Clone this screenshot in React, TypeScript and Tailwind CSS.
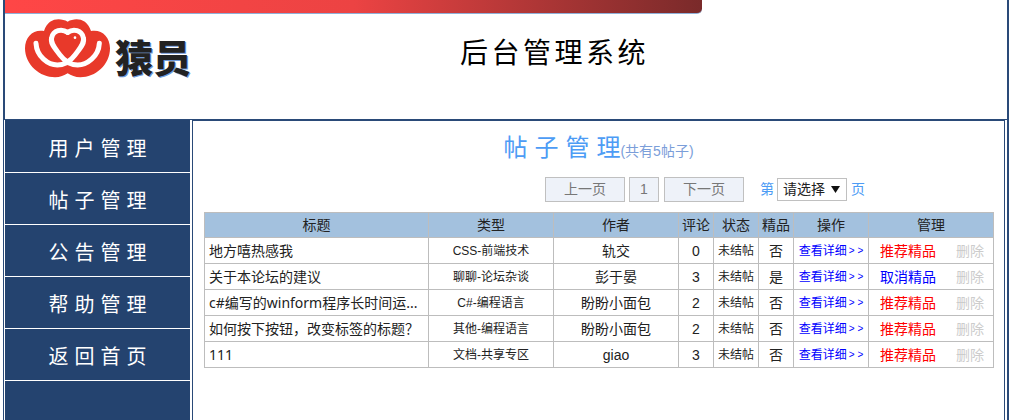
const menu = ["用户管理", "帖子管理", "公告管理", "帮助管理", "返回首页"]

const posts = [
  { title: "地方嘻热感我", type: "CSS-前端技术", author: "轨交", count: 0, best: "否", action: "推荐精品" },
  { title: "关于本论坛的建议", type: "聊聊-论坛杂谈", author: "彭于晏", count: 3, best: "是", action: "取消精品" },
  { title: "c#编写的winform程序长时间运...", type: "C#-编程语言", author: "盼盼小面包", count: 2, best: "否", action: "推荐精品" },
  { title: "如何按下按钮，改变标签的标题？", type: "其他-编程语言", author: "盼盼小面包", count: 2, best: "否", action: "推荐精品" },
  { title: "111", type: "文档-共享专区", author: "giao", count: 3, best: "否", action: "推荐精品" },
]

function Logo() {
  return (
    <svg className="w-[100px] h-[70px] shrink-0" viewBox="0 0 300 210">
      <path
        fill="#e8392a"
        d="M143 20C120 8 85 8 72 48C40 42 15 65 15 100C15 150 60 187 105 187C120 187 133 182 143 175C153 182 166 187 181 187C226 187 270 150 270 100C270 65 245 42 213 48C200 8 165 8 143 20Z"
      />
      <g fill="none" stroke="#fff" strokeWidth="15" strokeLinecap="round">
        <path d="M48 85C50 125 85 150 112 150C135 150 150 140 165 120C180 100 195 85 190 68C185 45 160 40 143 52" />
        <path d="M238 85C236 125 200 150 173 150C150 150 135 140 120 120C105 100 90 85 95 68C100 45 125 40 143 52" />
      </g>
      <circle cx="165" cy="68" r="4" fill="#fff" />
    </svg>
  )
}

export default function App() {
  return (
    <div className="ml-[3px] w-[1006px] h-[420px] overflow-hidden bg-white font-['Liberation_Sans','Noto_Sans_CJK_SC',sans-serif] text-[14px] text-[#222]">
      {/* Header */}
      <header className="h-[120px] border-x-2 border-b border-[#2a4a78]">
        <div className="w-[697px] h-[14px] border-b border-[#8fb0d8] rounded-br-[5px] bg-gradient-to-r from-[#ff4646] via-[#ec4343] to-[#7a2a2a]"></div>
        <div className="flex items-start">
          <div className="ml-[15px] mt-[1px]">
            <Logo />
          </div>
          <div className="-ml-[5px] mt-[23px] w-[84px] text-[38px] leading-[44px] font-black text-[#222] whitespace-nowrap [text-shadow:1px_1px_0_#6f9bdc]">
            猿员
          </div>
          <h1 className="ml-[261px] mt-[20px] text-[28px] leading-[40px] font-normal tracking-[3.5px] text-black whitespace-nowrap">
            后台管理系统
          </h1>
        </div>
      </header>

      <div className="flex h-[300px] border-r-2 border-[#2a4a78]">
        {/* Sidebar */}
        <aside className="w-[189px] h-full border-l border-[#2a4a78] pl-[1px]">
          <nav className="w-[185px] h-full pt-[1px] bg-[#24436f] text-white">
            {menu.map((item) => (
              <div
                key={item}
                className="h-[52px] border-b border-white flex items-center justify-center text-[20px] tracking-[6px] pl-[6px] pt-[4px]"
              >
                {item}
              </div>
            ))}
          </nav>
        </aside>

        {/* Main panel */}
        <main className="w-[813px] h-full border-x border-t border-[#2a4a78] flex flex-col">
          <div className="h-[40px] mt-[7px] flex items-end justify-center text-[#4d9cf5]">
            <span className="text-[24px] leading-[40px] tracking-[7px]">帖子管理</span>
            <span className="-ml-[7px] mb-[7px] text-[14px] leading-[20px] text-[#7b9ed9]">(共有5帖子)</span>
          </div>

          <div className="mt-[9px] flex items-center h-[25px] pl-[352px] text-[14px]">
            <button className="w-[80px] h-[25px] border border-[#c0c0c0] bg-[#eef2f9] text-[#777]">上一页</button>
            <span className="ml-[4px] w-[30px] h-[25px] flex items-center justify-center border border-[#c0c0c0] bg-[#eef2f9] text-[#777]">1</span>
            <button className="ml-[5px] w-[80px] h-[25px] border border-[#c0c0c0] bg-[#eef2f9] text-[#777]">下一页</button>
            <span className="ml-[16px] text-[#4d9cf5]">第</span>
            <div className="relative ml-[3px]">
              <select className="block appearance-none w-[70px] h-[23px] pl-[5px] border border-[#c0c0c0] bg-white text-[#222] text-[14px]">
                <option>请选择</option>
              </select>
              <svg className="absolute right-[7px] top-[8px] w-[9px] h-[7px]" viewBox="0 0 9 7">
                <path d="M0 0H9L4.5 7Z" fill="#111" />
              </svg>
            </div>
            <span className="ml-[4px] text-[#4d9cf5]">页</span>
          </div>

          {/* Post table */}
          <table className="ml-[11px] mt-[10px] w-[789px] table-fixed border-collapse text-center leading-[20px]">
            <colgroup>
              <col className="w-[224px]" />
              <col className="w-[125px]" />
              <col className="w-[125px]" />
              <col className="w-[35px]" />
              <col className="w-[45px]" />
              <col className="w-[35px]" />
              <col className="w-[75px]" />
              <col className="w-[125px]" />
            </colgroup>
            <thead>
              <tr className="h-[25px] bg-[#a3c1de]">
                {["标题", "类型", "作者", "评论", "状态", "精品", "操作", "管理"].map((h) => (
                  <th key={h} className="border border-[#bdbdbd] p-0 font-normal">
                    {h}
                  </th>
                ))}
              </tr>
            </thead>
            <tbody>
              {posts.map((post) => (
                <tr key={post.title} className="h-[26px]">
                  <td className="border border-[#bdbdbd] p-0 pl-[4px] text-left whitespace-nowrap overflow-hidden font-['Noto_Sans','Noto_Sans_CJK_SC',sans-serif]">{post.title}</td>
                  <td className="border border-[#bdbdbd] p-0 text-[12px]">{post.type}</td>
                  <td className="border border-[#bdbdbd] p-0">{post.author}</td>
                  <td className="border border-[#bdbdbd] p-0">{post.count}</td>
                  <td className="border border-[#bdbdbd] p-0 text-[12px]">未结帖</td>
                  <td className="border border-[#bdbdbd] p-0">{post.best}</td>
                  <td className="border border-[#bdbdbd] p-0 text-[12px] text-[#0000ff] whitespace-nowrap">
                    <div className="flex items-center justify-center pl-[3px]">
                      <span>查看详细</span>
                      <span className="ml-[2px] text-[10px] tracking-[3px]">&gt;&gt;</span>
                    </div>
                  </td>
                  <td className="border border-[#bdbdbd] p-0 whitespace-nowrap">
                    <div className="flex justify-between pl-[11px] pr-[9px]">
                      <span className={post.action === "取消精品" ? "text-[#0000ff]" : "text-[#ff0000]"}>{post.action}</span>
                      <span className="text-[#cccccc]">删除</span>
                    </div>
                  </td>
                </tr>
              ))}
            </tbody>
          </table>
        </main>
      </div>
    </div>
  )
}
